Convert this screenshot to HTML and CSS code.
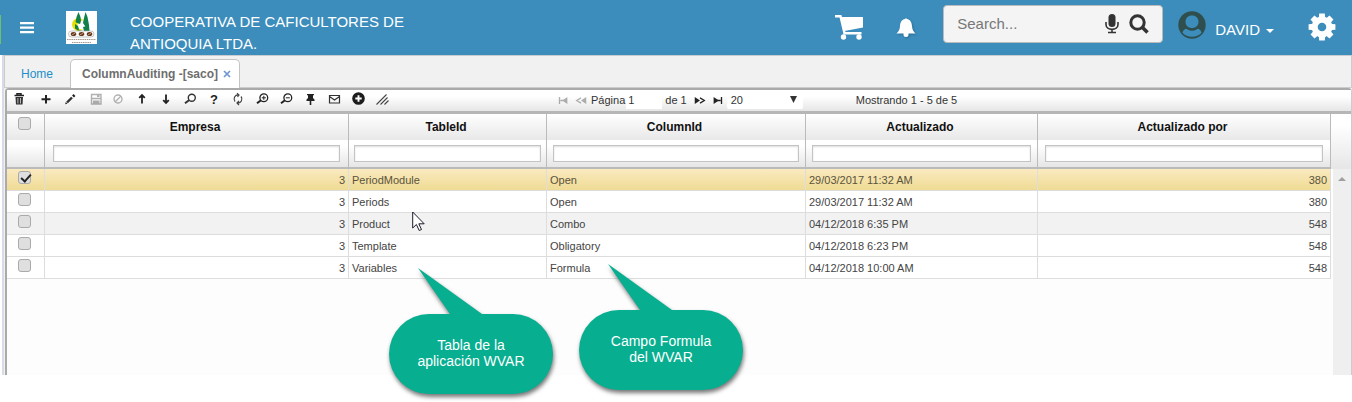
FILE: index.html
```html
<!DOCTYPE html>
<html lang="es">
<head>
<meta charset="utf-8">
<title>ColumnAuditing</title>
<link rel="stylesheet" href="styles.css">
</head>
<body>
<header class="topbar">
  <button class="icon-btn menu-btn" aria-label="Menú"><svg width="14" height="12" viewBox="0 0 14 12" fill="#fff"><path d="M0 0h14v2.300H0zM0 4.500h14v2.300H0zM0 9h14v2.300H0z"/></svg></button>
  <svg class="logo" width="31" height="33" viewBox="0 0 31 33" role="img" aria-label="Cooperativa">
    <path fill="#fff" d="M0 0h31v33H0z"/>
    <circle cx="12.500" cy="13.500" r="6.500" fill="#e8e000"/>
    <circle cx="16" cy="14" r="4.500" fill="#fff"/>
    <path d="M12.500 1l2 5 .5 4-1 3-3-1-1.500-1 1-5zM19.500 1l2 5 1.500 8 .5 6-3 1-1.500-6-2-3 1-5z" fill="#12804a"/>
    <path d="M9 13l3 2 1 4 4 1-5-.5-3-2zM17 16l4-1 1 5h-4z" fill="#12804a"/>
    <rect x="2.500" y="20" width="25.500" height="6" rx="3" fill="#fff" stroke="#aaa" stroke-width=".7"/>
    <ellipse cx="7.500" cy="23" rx="2.800" ry="2" fill="#6b3a1d"/><ellipse cx="15.500" cy="23" rx="2.800" ry="2" fill="#6b3a1d"/><ellipse cx="23.500" cy="23" rx="2.800" ry="2" fill="#6b3a1d"/>
    <path d="M6 23.800l3-1.600M14 23.800l3-1.600M22 23.800l3-1.600" stroke="#e8d8c8" stroke-width=".6"/>
    <path d="M1 28.500h29M6 31.500h19" stroke="#a3948c" stroke-width="1" stroke-dasharray="1.500 .7"/>
  </svg>
  <h1 class="company">COOPERATIVA DE CAFICULTORES DE ANTIOQUIA LTDA.</h1>
  <div class="top-actions">
    <button class="icon-btn" aria-label="Carrito"><svg width="30" height="26" viewBox="0 0 30 26"><path d="M1 1.200h5.500l4 17h17" fill="none" stroke="#fff" stroke-width="2.400"/><path d="M6 2h23v10.500L10.500 16z" fill="#fff"/><circle cx="9.500" cy="22" r="2.700" fill="#fff"/><circle cx="25" cy="22" r="2.700" fill="#fff"/></svg></button>
    <button class="icon-btn bell-btn" aria-label="Notificaciones"><svg width="20" height="21" viewBox="0 0 20 21"><path fill="#fff" d="M9 2a1.200 1.200 0 0 1 2 0c3.500.7 4.800 3.500 5 7 .2 4 1.500 5.500 3.500 7.500H.5C2.500 14.500 3.800 13 4 9c.2-3.500 1.500-6.300 5-7zM7.500 16h5v1.500a2.500 2.500 0 0 1-5 0z"/></svg></button>
    <form class="search">
      <input class="search-input" type="text" placeholder="Search..." aria-label="Buscar">
      <button type="button" class="icon-btn" aria-label="Voz"><svg width="14" height="20" viewBox="0 0 14 20"><rect x="3.500" y="0" width="7" height="13" rx="3.500" fill="#333"/><path d="M1 8v2.500c0 6.500 12 6.500 12 0V8M7 15v3M3 18.500h8" fill="none" stroke="#333" stroke-width="1.600"/></svg></button>
      <button type="button" class="icon-btn" aria-label="Buscar"><svg width="20" height="20" viewBox="0 0 20 20" fill="none" stroke="#333"><circle cx="8.500" cy="8.500" r="6.700" stroke-width="3"/><path d="M13.500 13.500l5 5" stroke-width="3.500"/></svg></button>
    </form>
    <button class="icon-btn user-btn"><svg width="28" height="28" viewBox="0 0 28 28"><circle cx="14" cy="14" r="13.700" fill="#2f4f4f"/><path fill="#3c8dbc" d="M14 4.500c3.900 0 6.500 2.600 6.500 6.200s-2.600 6.300-6.500 6.300-6.500-2.700-6.500-6.300 2.600-6.200 6.500-6.200z"/><path fill="#3c8dbc" d="M8.800 17.300c3 2.600 7.400 2.600 10.400 0 2.400.8 3.800 2.400 4.400 4.400-4.800 5.300-14.400 5.300-19.200 0 .6-2 2-3.600 4.400-4.400z"/><path d="M7.500 15.800c3 4.200 10 4.200 13 0" fill="none" stroke="#2f4f4f" stroke-width="1.600"/></svg><span>DAVID</span><svg class="caret" width="8" height="4" viewBox="0 0 8 4"><path d="M0 0h8L4 4z" fill="#fff"/></svg></button>
    <button class="icon-btn gear-btn" aria-label="Ajustes"><svg width="28" height="28" viewBox="-14 -14 28 28"><g fill="#fff"><path id="tooth" d="M-4 0L-2.800-13.400h5.600L4 0z"/><use href="#tooth" transform="rotate(45)"/><use href="#tooth" transform="rotate(90)"/><use href="#tooth" transform="rotate(135)"/><use href="#tooth" transform="rotate(180)"/><use href="#tooth" transform="rotate(225)"/><use href="#tooth" transform="rotate(270)"/><use href="#tooth" transform="rotate(315)"/><circle r="10.400"/></g><circle r="4.300" fill="#3c8dbc"/></svg></button>
  </div>
</header>

<main class="workspace">
  <nav class="tabs">
    <a class="tab" href="#home">Home</a>
    <div class="tab tab-active"><a class="tab-link" href="#audit">ColumnAuditing -[saco]</a><button class="icon-btn" aria-label="Cerrar"><svg width="8" height="8" viewBox="0 0 8 8"><path d="M1 1l6 6M7 1L1 7" stroke="#7095cf" stroke-width="1.700"/></svg></button></div>
  </nav>
  <section class="grid-panel">
    <div class="toolbar">
      <div class="tools">
        <button class="tool tool-first" aria-label="Eliminar"><svg viewBox="0 0 14 14"><path d="M2.500 3.500h9.500M5 3V1.800h4V3" fill="none" stroke="#222" stroke-width="1.500"/><path d="M3.500 5h7.500l-.5 7.500H4z" fill="#333"/><path d="M5.900 6v5.500M8.500 6v5.500" stroke="#ddd" stroke-width=".8"/></svg></button>
        <button class="tool" aria-label="Agregar"><svg viewBox="0 0 14 14"><path d="M7 3v8.500M2.500 7.200h9" stroke="#222" stroke-width="2"/></svg></button>
        <button class="tool" aria-label="Editar"><svg viewBox="0 0 14 14"><path d="M4 10.500l5-5" stroke="#333" stroke-width="2.400"/><path d="M10 4.500l1.500-1.500" stroke="#222" stroke-width="2.600"/><path d="M2.200 12.200l.6-2.200L4.400 11.700z" fill="#222"/></svg></button>
        <button class="tool tool-off tool-save" aria-label="Guardar" disabled><svg viewBox="0 0 14 14"><path d="M2.500 2.500h9.500v9.500h-9.500zM3 6.500h9" fill="none" stroke="#222" stroke-width="1.400"/><path d="M4 8.500h6.500v3.500h-6.500zM8 3h2.500v2H8z" fill="#222"/></svg></button>
        <button class="tool tool-off" aria-label="Cancelar" disabled><svg viewBox="0 0 14 14"><circle cx="7" cy="7" r="4" fill="none" stroke="#222" stroke-width="1.300"/><path d="M4 10l6-6" stroke="#222" stroke-width="1.300"/></svg></button>
        <button class="tool" aria-label="Subir"><svg viewBox="0 0 14 14"><path d="M7 11.500V4M4.200 5.800L7 3l2.800 2.800" fill="none" stroke="#222" stroke-width="1.800"/></svg></button>
        <button class="tool" aria-label="Bajar"><svg viewBox="0 0 14 14"><path d="M7 2.500v8M4.200 8.200L7 11l2.800-2.800" fill="none" stroke="#222" stroke-width="1.800"/></svg></button>
        <button class="tool" aria-label="Buscar"><svg viewBox="0 0 14 14"><circle cx="8.800" cy="5.800" r="3.500" fill="none" stroke="#333" stroke-width="1.400"/><path d="M6 8.300l-4 3" stroke="#333" stroke-width="2"/></svg></button>
        <button class="tool tool-text" aria-label="Ayuda">?</button>
        <button class="tool" aria-label="Refrescar"><svg viewBox="0 0 14 14"><path d="M7.500 3a4 4 0 0 0-3.500 6.500M6.500 11a4 4 0 0 0 3.500-6.500M6 1.200L8 3 6.500 5M8 9l-2 2 2 2" fill="none" stroke="#444" stroke-width="1.200"/></svg></button>
        <button class="tool" aria-label="Acercar"><svg viewBox="0 0 14 14"><circle cx="8.800" cy="5.800" r="3.900" fill="none" stroke="#222" stroke-width="1.300"/><path d="M6 8.300l-4 3" stroke="#222" stroke-width="2"/><path d="M6.800 5.800h4M8.800 3.800v4" stroke="#222"/></svg></button>
        <button class="tool" aria-label="Alejar"><svg viewBox="0 0 14 14"><circle cx="8.800" cy="5.800" r="3.900" fill="none" stroke="#222" stroke-width="1.300"/><path d="M6 8.300l-4 3" stroke="#222" stroke-width="2"/><path d="M6.800 5.800h4" stroke="#222"/></svg></button>
        <button class="tool" aria-label="Fijar"><svg viewBox="0 0 14 14"><path fill="#222" d="M4 2h7v1.300h-1V6l1.500 1.500V9H8.300v4H6.700V9H3.500V7.500L5 6V3.300H4z"/></svg></button>
        <button class="tool" aria-label="Correo"><svg viewBox="0 0 14 14"><path d="M2.500 3.500h10v7.500h-10zM2.500 4.500l5 3.500 5-3.500" fill="none" stroke="#333" stroke-width="1.200"/></svg></button>
        <button class="tool" aria-label="Nuevo"><svg viewBox="0 0 14 14"><circle cx="7.500" cy="6.500" r="6.300" fill="#1c1c1c"/><path d="M7.500 3.300v6.400M4.300 6.500h6.400" stroke="#fff" stroke-width="1.900"/></svg></button>
        <button class="tool" aria-label="Opciones"><svg viewBox="0 0 14 14"><path d="M1.500 12.500l10-10M5.500 12.500l7-7M9.500 12.500l4-4" stroke="#444" stroke-width="1.100"/></svg></button>
      </div>
      <div class="pager">
        <button class="page-btn tool-off" aria-label="Primera" disabled><svg width="12" height="7" viewBox="0 0 12 8"><path d="M2 0v8M3 4h3" stroke="#222" stroke-width="1.500"/><path d="M11 0v8L5 4z" fill="#222"/></svg></button>
        <button class="page-btn tool-off" aria-label="Anterior" disabled><svg width="12" height="7" viewBox="0 0 12 8"><path d="M6 1L1 4l5 3" fill="none" stroke="#222" stroke-width="1.400"/><path d="M12 0v8L6 4z" fill="#222"/></svg></button>
        <label class="page-label" for="page">Página</label>
        <input class="page-input" id="page" type="text" value="1">
        <span class="page-total">de 1</span>
        <button class="page-btn" aria-label="Siguiente"><svg width="12" height="7" viewBox="0 0 12 8"><path d="M0 0v8l6-4z" fill="#222"/><path d="M6 1l5 3-5 3" fill="none" stroke="#222" stroke-width="1.400"/></svg></button>
        <button class="page-btn" aria-label="Última"><svg width="12" height="7" viewBox="0 0 12 8"><path d="M10 0v8M5 4h4" stroke="#222" stroke-width="1.500"/><path d="M1 0v8l6-4z" fill="#222"/></svg></button>
        <div class="select-wrap"><select class="page-size" aria-label="Filas por página"><option>20</option></select><svg class="select-arrow" width="7" height="7" viewBox="0 0 7 7"><path d="M0 0h7L3.500 7z" fill="#333"/></svg></div>
      </div>
      <div class="summary">Mostrando 1 - 5 de 5</div>
    </div>
    <div class="grid-body">
      <table class="grid">
        <colgroup><col class="c-check"><col class="c-empresa"><col class="c-table"><col class="c-column"><col class="c-date"><col class="c-by"></colgroup>
        <thead>
          <tr class="head-row"><th class="check"><input type="checkbox" aria-label="Todos"></th><th>Empresa</th><th>TableId</th><th>ColumnId</th><th>Actualizado</th><th>Actualizado por</th></tr>
          <tr class="filter-row"><th></th><th><input class="filter" type="text" aria-label="Empresa"></th><th><input class="filter" type="text" aria-label="TableId"></th><th><input class="filter" type="text" aria-label="ColumnId"></th><th><input class="filter" type="text" aria-label="Actualizado"></th><th><input class="filter" type="text" aria-label="Actualizado por"></th></tr>
        </thead>
        <tbody>
          <tr class="selected"><td class="check"><input type="checkbox" checked aria-label="Fila 1"></td><td class="num">3</td><td>PeriodModule</td><td>Open</td><td>29/03/2017 11:32 AM</td><td class="num">380</td></tr>
          <tr><td class="check"><input type="checkbox" aria-label="Fila 2"></td><td class="num">3</td><td>Periods</td><td>Open</td><td>29/03/2017 11:32 AM</td><td class="num">380</td></tr>
          <tr class="hovered"><td class="check"><input type="checkbox" aria-label="Fila 3"></td><td class="num">3</td><td>Product</td><td>Combo</td><td>04/12/2018 6:35 PM</td><td class="num">548</td></tr>
          <tr><td class="check"><input type="checkbox" aria-label="Fila 4"></td><td class="num">3</td><td>Template</td><td>Obligatory</td><td>04/12/2018 6:23 PM</td><td class="num">548</td></tr>
          <tr><td class="check"><input type="checkbox" aria-label="Fila 5"></td><td class="num">3</td><td>Variables</td><td>Formula</td><td>04/12/2018 10:00 AM</td><td class="num">548</td></tr>
        </tbody>
      </table>
      <div class="gutter"><div class="gutter-head"></div><div class="scrollbar"><svg width="8" height="4" viewBox="0 0 8 4"><path d="M4 0l4 4H0z" fill="#a0a0a0"/></svg></div></div>
    </div>
  </section>
</main>

<svg class="pointer" width="14" height="21" viewBox="0 0 14 21"><path d="M.7 1v16l3.700-3.500 2.800 6 2.300-1-2.700-5.700h5.400z" fill="#fff" stroke="#1b1b2b"/></svg>
<div class="callout callout-table"><svg class="callout-shape" width="164" height="126" viewBox="0 0 164 126"><path d="M29 0l64 46h31a40 40 0 0 1 0 80H40a40 40 0 0 1 0-80h21z" fill="#07ae90"/></svg><p class="callout-text">Tabla de la<br>aplicación WVAR</p></div>
<div class="callout callout-column"><svg class="callout-shape" width="164" height="126" viewBox="0 0 164 126"><path d="M29 0l64 46h31a40 40 0 0 1 0 80H40a40 40 0 0 1 0-80h21z" fill="#07ae90"/></svg><p class="callout-text">Campo Formula<br>del WVAR</p></div>
</body>
</html>
```
FILE: styles.css
```css
* { box-sizing: border-box; }
body {
  margin: 0;
  min-height: 100vh;
  padding-bottom: 27px;
  display: flex;
  flex-direction: column;
  position: relative;
  background: #fff;
  font-family: "Liberation Sans", Arial, sans-serif;
  font-size: 11px;
  color: #444;
}
button, input, select { font: inherit; color: inherit; }
svg { display: block; flex: none; }
.icon-btn, .tool, .page-btn {
  display: flex;
  align-items: center;
  justify-content: center;
  padding: 0;
  border: 0;
  background: none;
}

.topbar {
  display: flex;
  align-items: center;
  min-height: 55px;
  padding: 0 16px 0 20px;
  background: linear-gradient(#6cbf6c, #6cbf6c) 0 15px / 1px 29px no-repeat #3c8dbc;
  color: #fff;
  font-size: 15px;
}
.logo { margin-left: 32px; }
.company {
  width: 280px;
  margin: 10px 0 0 33px;
  font-size: 15px;
  font-weight: normal;
  line-height: 22px;
}
.top-actions { display: flex; align-items: center; margin-left: auto; }
.bell-btn { margin: 0 27px 0 32px; filter: drop-shadow(1px 1px 1px #2b6c93); }
.search {
  display: flex;
  align-items: center;
  gap: 10px;
  width: 220px;
  height: 38px;
  margin: 0 15px 8px 0;
  padding: 0 13px;
  border: 1px solid #bbb;
  border-radius: 4px;
  background: #f4f4f4;
  color: #777;
}
.search-input { flex: 1; min-width: 0; padding: 0; border: 0; outline: 0; background: none; }
.search-input::placeholder { color: #777; opacity: 1; }
.user-btn { gap: 9px; margin-right: 34px; }
.user-btn > span { padding-top: 3px; }
.user-btn > svg:first-child { margin-bottom: 6px; }
.user-btn .caret { margin: 6px 0 0 -3px; }
.gear-btn { margin-bottom: 2px; }

.workspace {
  flex: 1;
  display: flex;
  flex-direction: column;
  margin-left: 2px;
  border-top: 1px solid #c8cbd0;
  border-left: 2px solid #d8dcea;
  background: #f1f1f1;
}
.tabs {
  display: flex;
  align-items: flex-end;
  height: 32px;
  border-left: 1px solid #ccc;
  border-right: 1px solid #ccc;
  border-bottom: 1px solid #ccc;
  font-size: 12px;
}
.tab { height: 29px; padding-left: 16px; line-height: 32px; color: #1e8fc8; text-decoration: none; }
.tab-active {
  display: flex;
  align-items: center;
  gap: 5px;
  margin: 0 0 -1px 17px;
  padding: 0 8px 0 11px;
  border: 1px solid #c4c4c4;
  border-bottom: 0;
  border-radius: 5px 5px 0 0;
  background: #fff;
}
.tab-link { color: #6e6e6e; font-weight: bold; text-decoration: none; }

.grid-panel {
  flex: 1;
  display: flex;
  flex-direction: column;
  margin-left: 1px;
  border: 1px solid #aaa;
  border-width: 2px 1px 0 2px;
  border-right-color: #ccc;
  border-radius: 4px 4px 0 0;
  background: #fdfdfd;
}
.toolbar {
  display: grid;
  grid-template-columns: 41% auto 1fr;
  align-items: start;
  height: 24px;
  border-bottom: 3px solid #b6b6b6;
  background: linear-gradient(#fff 30%, #e6e6e6);
  color: #333;
}
.tools { display: flex; }
.tool { width: 24px; height: 18px; }
.tool svg { width: 14px; height: 14px; }
.tool-first { width: 23px; margin-right: 4px; }
.tool-save { padding-left: 4px; }
.tool-text { font-size: 13px; font-weight: bold; color: #222; }
.tool-off { opacity: .35; }
.pager { display: flex; align-items: center; height: 20px; margin-left: -4px; }
.page-btn { width: 18px; }
.page-label { padding-left: 1px; }
.page-input { width: 36px; height: 18px; margin: 0 3px 0 1px; padding: 0 2px; border: 0; background: #fff; }
.page-total { margin-right: 4px; }
.select-wrap { position: relative; }
.page-size {
  display: block;
  width: 76px;
  height: 18px;
  padding: 0 4px;
  border: 0;
  border-radius: 2px;
  background: #fff;
  appearance: none;
}
.select-arrow { position: absolute; top: 5px; right: 6px; pointer-events: none; }
.summary { padding-left: 53px; line-height: 21px; }

.grid-body { flex: 1; display: flex; align-items: stretch; }
.grid { flex: 1; align-self: flex-start; table-layout: fixed; border-spacing: 0; width: 100%; }
.c-check { width: 38px; }
.c-empresa { width: 304px; }
.c-table { width: 198px; }
.c-column { width: 259px; }
.c-date { width: 232px; }
.c-by { width: 293px; }
.grid th, .grid td { padding: 0; overflow: hidden; white-space: nowrap; }
.grid th { border-right: 1px solid #bbb; }
.head-row th { height: 26px; background: linear-gradient(#fff, #e8e8e8); color: #111; font-size: 12px; }
.head-row th:not(.check) { padding-right: 3px; }
.filter-row th {
  height: 29px;
  border-bottom: 2px solid #bbb;
  background: linear-gradient(#fff 20%, #e6e6e6);
}
.filter {
  display: block;
  width: 95%;
  height: 17px;
  margin: 0 auto;
  padding: 0 3px;
  border: 1px solid #c4c4c4;
  background: #fff;
  box-shadow: inset 0 1px 2px #ddd;
}
.grid td {
  height: 22px;
  padding: 0 3px;
  border-right: 1px solid #ddd;
  border-bottom: 1px solid #ddd;
  background: #fff;
}
.grid td.num { text-align: right; }
.grid .selected td { background: linear-gradient(#faeac0, #efdb94); color: #5a533c; }
.grid .hovered td { background: #f2f2f2; }
.grid .check { padding: 3px 2px 0 0; vertical-align: top; text-align: center; }
.grid td.check { padding-top: 2px; }
.check input {
  display: block;
  width: 13px;
  height: 13px;
  margin: 0 auto;
  border: 1px solid #aaa;
  border-radius: 3px;
  background: #dfdfdf;
  appearance: none;
}
.check input:checked::after {
  content: "";
  display: block;
  width: 4px;
  height: 8px;
  margin: 0 0 0 4px;
  border: solid #222;
  border-width: 0 2px 2px 0;
  transform: rotate(42deg);
}
.gutter { flex: none; display: flex; flex-direction: column; width: 20px; }
.gutter-head { height: 55px; background: linear-gradient(#fff 20%, #e6e6e6); }
.scrollbar { flex: 1; margin-left: 2px; padding: 8px 5px; background: #efefef; }

.pointer { position: absolute; left: 412px; top: 211px; }
.callout { position: absolute; width: 164px; height: 126px; color: #fff; font-size: 14px; }
.callout-table { left: 389px; top: 268px; }
.callout-column { left: 579px; top: 264px; }
.callout-shape { filter: drop-shadow(1px 3px 2px #777); }
.callout-text { position: absolute; inset: 69px 0 auto; margin: 0; line-height: 16px; text-align: center; }
```
